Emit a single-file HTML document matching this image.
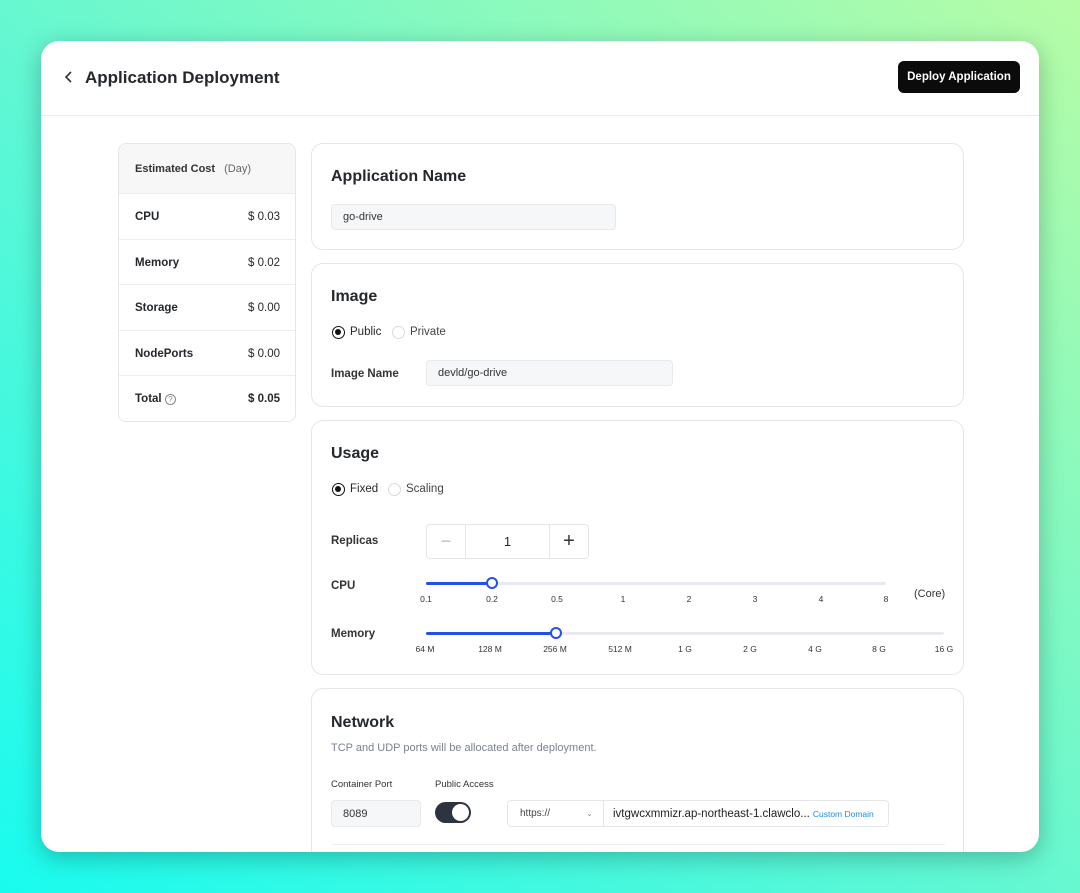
<!DOCTYPE html>
<html><head><meta charset="utf-8"><style>
*{box-sizing:border-box;margin:0;padding:0}
body{width:1080px;height:893px;overflow:hidden;position:relative;font-family:"Liberation Sans",sans-serif;color:#24282c;background:linear-gradient(to top right,#19fbef 0%,#5ff7d4 45%,#b6fca6 100%)}
.a{position:absolute}
.card{position:absolute;left:41px;top:41px;width:998px;height:811px;background:#fff;border-radius:18px;overflow:hidden;box-shadow:0 6px 24px rgba(0,0,0,.25)}
.box{position:absolute;border:1px solid #e4e6ea;border-radius:12px;background:#fff}
.h{font-size:16px;font-weight:bold;color:#24282c}
.inp{position:absolute;background:#f6f7f8;border:1px solid #e8eaed;border-radius:4px;font-size:11px;color:#333;padding-left:11px;display:flex;align-items:center}
.lbl{font-size:11.5px;font-weight:bold;color:#333}
.row{position:absolute;left:0;width:177px;height:46px;border-top:1px solid #eceef1;font-size:11.5px;display:flex;align-items:center;justify-content:space-between;padding:0 16px}
.radio{position:absolute;width:13px;height:13px;border-radius:50%;border:1px solid #d7dadf}
.radio.on{border:1.5px solid #111}
.radio.on::after{content:"";position:absolute;left:2px;top:2px;width:6px;height:6px;border-radius:50%;background:#111}
.t{position:absolute;font-size:8.5px;color:#333;transform:translateX(-50%)}
</style></head><body>
<div class="card">
 <svg class="a" style="left:23px;top:29px" width="10" height="14" viewBox="0 0 10 14"><path d="M7 2L2 7l5 5" fill="none" stroke="#333" stroke-width="1.6"/></svg>
 <div class="a" style="left:44px;top:27px;font-size:17px;font-weight:bold;color:#24282c">Application Deployment</div>
 <div class="a" style="left:857px;top:20px;width:122px;height:32px;background:#0b0b0b;border-radius:6px;color:#fff;font-size:11.5px;font-weight:bold;display:flex;align-items:center;justify-content:center">Deploy Application</div>
 <div class="a" style="left:0;top:74px;width:998px;height:1px;background:#e8eaed"></div>

 <div class="box" style="left:77px;top:102px;width:178px;height:279px;border-radius:8px;overflow:hidden">
  <div class="a" style="left:0;top:0;width:178px;height:49px;background:#f7f7f8;font-size:11px;font-weight:bold;padding:19px 16px;color:#333">Estimated Cost <span style="font-weight:normal;color:#666;margin-left:6px">(Day)</span></div>
  <div class="row" style="top:49px"><b>CPU</b><span>$ 0.03</span></div>
  <div class="row" style="top:95px"><b>Memory</b><span>$ 0.02</span></div>
  <div class="row" style="top:140px"><b>Storage</b><span>$ 0.00</span></div>
  <div class="row" style="top:186px"><b>NodePorts</b><span>$ 0.00</span></div>
  <div class="row" style="top:231px"><b>Total <span style="font-weight:normal;color:#888;border:1px solid #888;border-radius:50%;display:inline-block;width:11px;height:11px;font-size:8px;text-align:center;line-height:10px">?</span></b><b>$ 0.05</b></div>
 </div>

 <div class="box" style="left:270px;top:102px;width:653px;height:107px">
  <div class="a h" style="left:19px;top:24px">Application Name</div>
  <div class="inp" style="left:19px;top:60px;width:285px;height:26px">go-drive</div>
 </div>

 <div class="box" style="left:270px;top:222px;width:653px;height:144px">
  <div class="a h" style="left:19px;top:24px">Image</div>
  <div class="radio on" style="left:20px;top:62px"></div><div class="a" style="left:38px;top:62px;font-size:11.5px">Public</div>
  <div class="radio" style="left:80px;top:62px"></div><div class="a" style="left:98px;top:62px;font-size:11.5px;color:#444">Private</div>
  <div class="a lbl" style="left:19px;top:104px">Image Name</div>
  <div class="inp" style="left:114px;top:96px;width:247px;height:26px">devld/go-drive</div>
 </div>

 <div class="box" style="left:270px;top:379px;width:653px;height:255px">
  <div class="a h" style="left:19px;top:24px">Usage</div>
  <div class="radio on" style="left:20px;top:62px"></div><div class="a" style="left:38px;top:62px;font-size:11.5px">Fixed</div>
  <div class="radio" style="left:76px;top:62px"></div><div class="a" style="left:94px;top:62px;font-size:11.5px;color:#444">Scaling</div>
  <div class="a lbl" style="left:19px;top:114px">Replicas</div>
  <div class="a" style="left:114px;top:103px;width:163px;height:35px;border:1px solid #e4e6ea;border-radius:4px;display:flex">
   <div style="width:39px;border-right:1px solid #e4e6ea;text-align:center;line-height:32px;color:#bbb;font-size:18px">−</div>
   <div style="width:84px;border-right:1px solid #e4e6ea;text-align:center;line-height:33px;font-size:13px">1</div>
   <div style="flex:1;text-align:center;line-height:32px;font-size:20px;color:#333">+</div>
  </div>
  <div class="a lbl" style="left:19px;top:159px">CPU</div>
  <div class="a" style="left:114px;top:161px;width:460px;height:3px;background:#e8eaf0;border-radius:2px"></div>
  <div class="a" style="left:114px;top:161px;width:66px;height:3px;background:#2152e8;border-radius:2px"></div>
  <div class="a" style="left:174px;top:156px;width:12px;height:12px;border-radius:50%;border:2px solid #2152e8;background:#fff"></div>
  <div class="t" style="left:114px;top:173px">0.1</div><div class="t" style="left:180px;top:173px">0.2</div><div class="t" style="left:245px;top:173px">0.5</div><div class="t" style="left:311px;top:173px">1</div><div class="t" style="left:377px;top:173px">2</div><div class="t" style="left:443px;top:173px">3</div><div class="t" style="left:509px;top:173px">4</div><div class="t" style="left:574px;top:173px">8</div>
  <div class="a" style="left:602px;top:167px;font-size:11px;color:#333">(Core)</div>
  <div class="a lbl" style="left:19px;top:207px">Memory</div>
  <div class="a" style="left:114px;top:211px;width:518px;height:3px;background:#e8eaf0;border-radius:2px"></div>
  <div class="a" style="left:114px;top:211px;width:130px;height:3px;background:#2152e8;border-radius:2px"></div>
  <div class="a" style="left:238px;top:206px;width:12px;height:12px;border-radius:50%;border:2px solid #2152e8;background:#fff"></div>
  <div class="t" style="left:113px;top:223px">64 M</div><div class="t" style="left:178px;top:223px">128 M</div><div class="t" style="left:243px;top:223px">256 M</div><div class="t" style="left:308px;top:223px">512 M</div><div class="t" style="left:373px;top:223px">1 G</div><div class="t" style="left:438px;top:223px">2 G</div><div class="t" style="left:503px;top:223px">4 G</div><div class="t" style="left:567px;top:223px">8 G</div><div class="t" style="left:632px;top:223px">16 G</div>
 </div>

 <div class="box" style="left:270px;top:647px;width:653px;height:200px">
  <div class="a h" style="left:19px;top:25px">Network</div>
  <div class="a" style="left:19px;top:53px;font-size:11px;color:#7a8290">TCP and UDP ports will be allocated after deployment.</div>
  <div class="a" style="left:19px;top:90px;font-size:9.5px;color:#333">Container Port</div>
  <div class="a" style="left:123px;top:90px;font-size:9.5px;color:#333">Public Access</div>
  <div class="inp" style="left:19px;top:111px;width:90px;height:27px">8089</div>
  <div class="a" style="left:123px;top:113px;width:36px;height:21px;border-radius:11px;background:#2d3340"><div class="a" style="left:17px;top:2px;width:17px;height:17px;border-radius:50%;background:#fff"></div></div>
  <div class="a" style="left:195px;top:111px;width:382px;height:27px;border:1px solid #e4e6ea;border-radius:4px;display:flex;align-items:center;font-size:10px">
   <div style="width:96px;height:100%;border-right:1px solid #e4e6ea;display:flex;align-items:center;justify-content:space-between;padding:0 10px 0 12px;color:#444">https://<span style="font-size:8px;color:#888">⌄</span></div>
   <div style="padding-left:9px;font-size:11.5px;color:#222">ivtgwcxmmizr.ap-northeast-1.clawclo...</div>
   <div style="padding-left:3px;font-size:8.5px;color:#1c8fe0">Custom Domain</div>
  </div>
  <div class="a" style="left:19px;top:155px;width:614px;height:1px;background:#eceef1"></div>
 </div>
</div>
</body></html>
